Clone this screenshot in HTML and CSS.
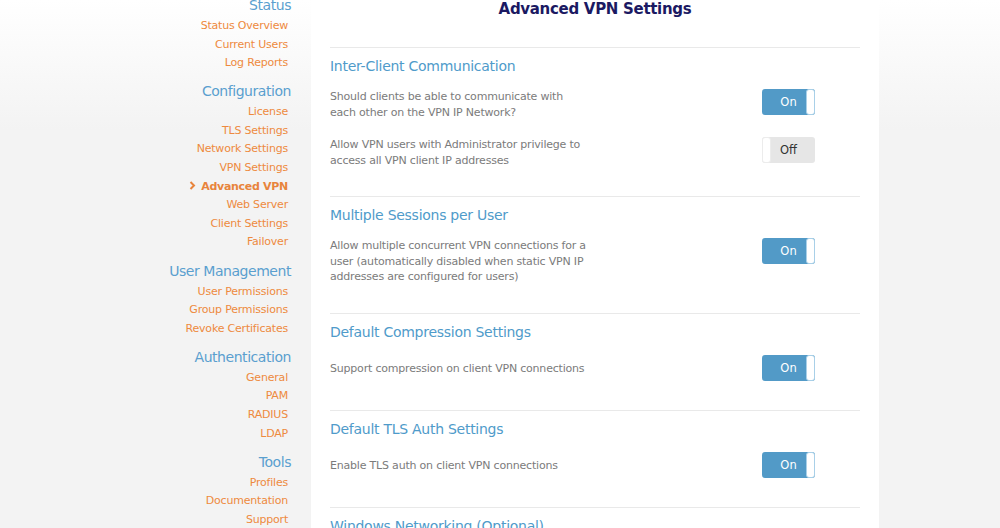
FILE: index.html
```html
<!DOCTYPE html>
<html lang="en">
<head>
    <meta charset="UTF-8">
    <title>Advanced VPN Settings</title>
    <link rel="stylesheet" href="styles.css">
</head>
<body>
    <div class="layout">
        <nav class="sidebar">
            <h3>Status</h3>
            <a href="#">Status Overview</a>
            <a href="#">Current Users</a>
            <a href="#">Log Reports</a>

            <h3>Configuration</h3>
            <a href="#">License</a>
            <a href="#">TLS Settings</a>
            <a href="#">Network Settings</a>
            <a href="#">VPN Settings</a>
            <a href="#" class="active">
                <svg width="7" height="9" viewBox="0 0 7 9"><polyline points="1.5,1 5,4.5 1.5,8" fill="none" stroke="#e8843c" stroke-width="2"/></svg>
                Advanced VPN
            </a>
            <a href="#">Web Server</a>
            <a href="#">Client Settings</a>
            <a href="#">Failover</a>

            <h3>User Management</h3>
            <a href="#">User Permissions</a>
            <a href="#">Group Permissions</a>
            <a href="#">Revoke Certificates</a>

            <h3>Authentication</h3>
            <a href="#">General</a>
            <a href="#">PAM</a>
            <a href="#">RADIUS</a>
            <a href="#">LDAP</a>

            <h3>Tools</h3>
            <a href="#">Profiles</a>
            <a href="#">Documentation</a>
            <a href="#">Support</a>
        </nav>

        <main class="panel">
            <h1>Advanced VPN Settings</h1>

            <section>
                <h2>Inter-Client Communication</h2>
                <div class="row">
                    <p>Should clients be able to communicate with<br>each other on the VPN IP Network?</p>
                    <div class="toggle on"><span>On</span><i></i></div>
                </div>
                <div class="row">
                    <p>Allow VPN users with Administrator privilege to<br>access all VPN client IP addresses</p>
                    <div class="toggle off"><i></i><span>Off</span></div>
                </div>
            </section>

            <section>
                <h2>Multiple Sessions per User</h2>
                <div class="row">
                    <p>Allow multiple concurrent VPN connections for a<br>user (automatically disabled when static VPN IP<br>addresses are configured for users)</p>
                    <div class="toggle on"><span>On</span><i></i></div>
                </div>
            </section>

            <section>
                <h2>Default Compression Settings</h2>
                <div class="row">
                    <p class="single">Support compression on client VPN connections</p>
                    <div class="toggle on"><span>On</span><i></i></div>
                </div>
            </section>

            <section>
                <h2>Default TLS Auth Settings</h2>
                <div class="row">
                    <p class="single">Enable TLS auth on client VPN connections</p>
                    <div class="toggle on"><span>On</span><i></i></div>
                </div>
            </section>

            <section>
                <h2>Windows Networking (Optional)</h2>
            </section>
        </main>
    </div>
</body>
</html>
```

FILE: styles.css
```css
/* General styles */
body {
    margin: 0;
    padding: 0;
    height: 528px;
    overflow: hidden;
    font-family: "DejaVu Sans", Verdana, sans-serif;
    background: linear-gradient(#ffffff 0, #f3f3f3 130px);
}

.layout {
    display: flex;
    gap: 20px;
}

/* Sidebar */
.sidebar {
    width: 291px;
    display: flex;
    flex-direction: column;
    align-items: flex-end;
    margin-top: -5px;
}

.sidebar h3 {
    margin: 8.5px 0 1px 0;
    font-size: 14px;
    font-weight: normal;
    line-height: 21px;
    letter-spacing: -0.45px;
    color: #5a9fcf;
}

.sidebar h3:first-child {
    margin-top: 0;
}

.sidebar a {
    font-size: 11px;
    line-height: 18.6px;
    letter-spacing: -0.2px;
    color: #ee8a3e;
    text-decoration: none;
    padding-right: 3px;
}

.sidebar a.active {
    font-weight: bold;
    letter-spacing: -0.3px;
    color: #e8843c;
}

.sidebar a.active svg {
    margin-right: 2px;
}

/* Content panel */
.panel {
    width: 530px;
    min-height: 600px;
    background-color: #ffffff;
    padding: 0 19px;
}

.panel h1 {
    margin: -4px 0 25px 0;
    font-size: 15px;
    line-height: 26px;
    letter-spacing: -0.3px;
    text-align: center;
    color: #1b1962;
}

section {
    border-top: 1px solid #e9e9e9;
    padding: 8px 0 28px 0;
}

section h2 {
    margin: 0 0 13px 0;
    font-size: 14px;
    font-weight: normal;
    line-height: 20px;
    letter-spacing: -0.27px;
    color: #4f9bca;
}

.row {
    display: flex;
    justify-content: space-between;
    align-items: flex-start;
    padding-right: 45px;
}

.row + .row {
    margin-top: 17px;
}

.row p {
    margin: 0;
    font-size: 11px;
    line-height: 15.5px;
    letter-spacing: -0.2px;
    color: #7b7b7b;
}

.row p.single {
    line-height: 27px;
}

/* Toggle switches */
.toggle {
    width: 53px;
    height: 26px;
    border-radius: 3px;
    display: flex;
    box-sizing: border-box;
    font-size: 11.5px;
    line-height: 26px;
}

.toggle span {
    flex: 1;
    text-align: center;
}

.toggle i {
    width: 9px;
    background-color: #ffffff;
    border-radius: 3px;
    box-sizing: border-box;
}

.toggle.on {
    background-color: #529ac7;
    color: #ffffff;
}

.toggle.on span {
    padding-left: 9px;
}

.toggle.on i {
    border: 1px solid #a9d0e8;
}

.toggle.off {
    background-color: #e6e6e6;
    color: #333333;
}

.toggle.off span {
    padding-right: 9px;
}

.toggle.off i {
    border: 1px solid #ececec;
}
```
